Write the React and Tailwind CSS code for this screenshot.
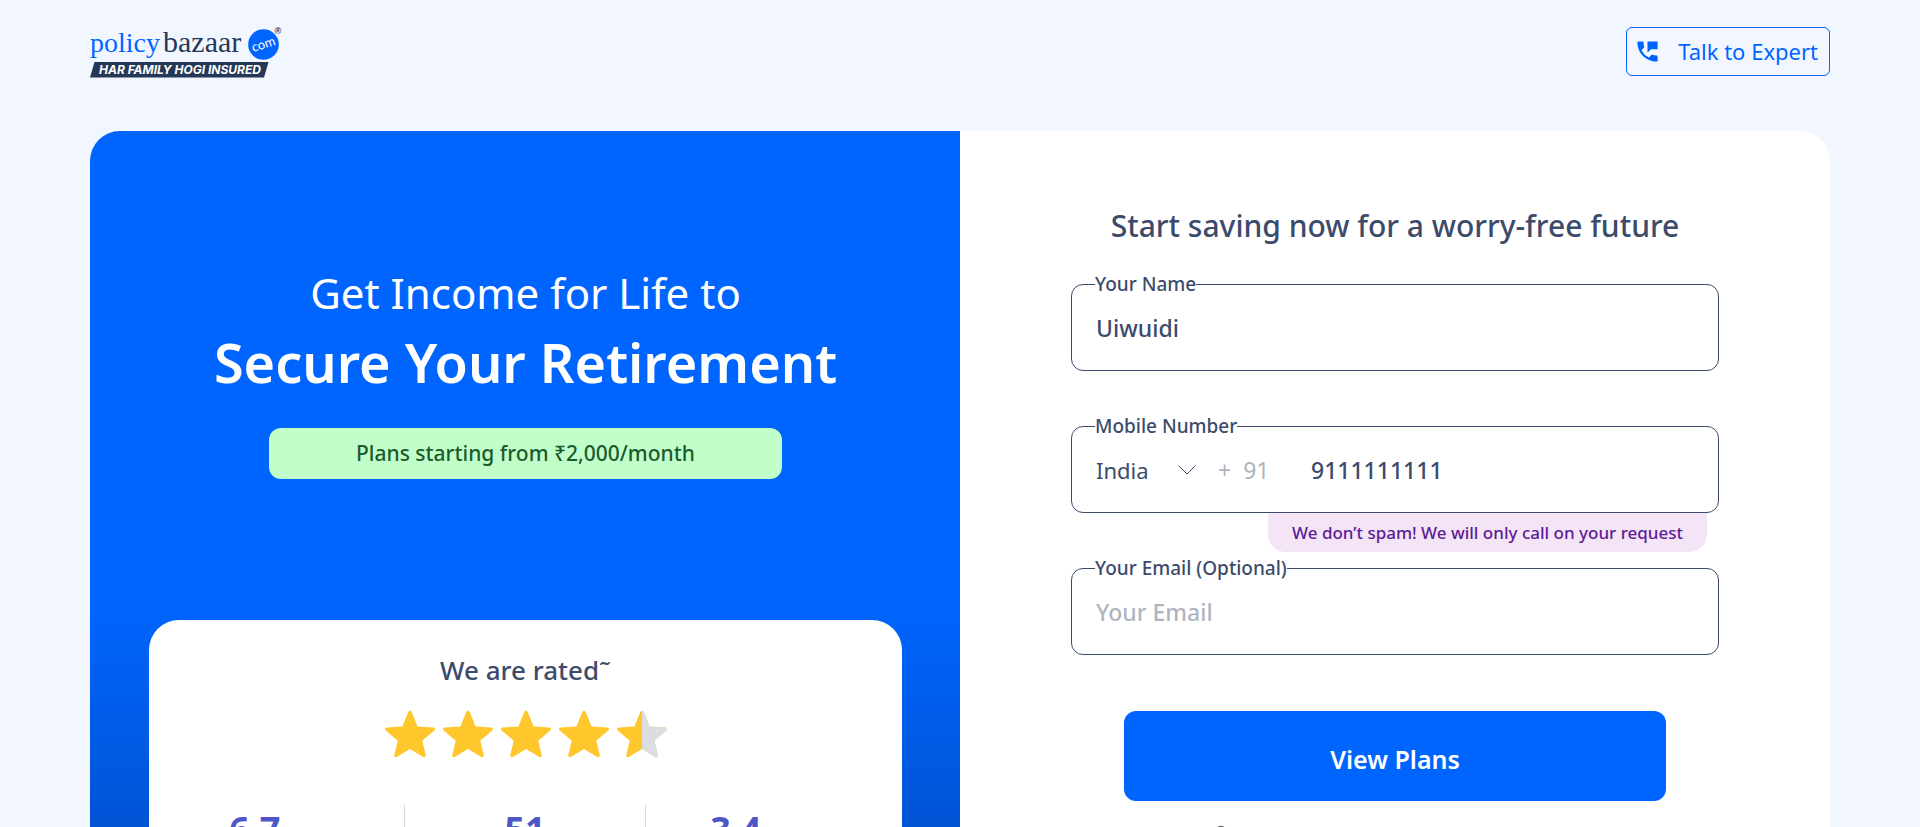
import React from "react";
import { MdPermPhoneMsg } from "react-icons/md";
import { Lock } from "lucide-react";

function Logo() {
  return (
    <svg viewBox="0 0 194 54" className="h-[54px] w-[194px] overflow-visible" role="img" aria-label="policybazaar.com">
      <text x="0" y="25" fontFamily="'Liberation Serif', serif" fontSize="28" fill="#0065ff">policy</text>
      <text x="73" y="25" fontFamily="'Liberation Serif', serif" fontSize="30" fill="#253858">bazaar</text>
      <circle cx="173.500" cy="17.500" r="15.300" fill="#0065ff" />
      <text x="173.500" y="21.500" textAnchor="middle" transform="rotate(-18 173.500 17.500)" fontFamily="Lato, sans-serif" fontSize="13" fill="#fff">com</text>
      <text x="184.500" y="7" fontFamily="'Liberation Sans', sans-serif" fontWeight="700" fontSize="9" fill="#253858">®</text>
      <path d="M4.500 35H178.500L174 50.500H0Z" fill="#253858" />
      <text x="9" y="47" fontFamily="Inter, sans-serif" fontWeight="700" fontStyle="italic" fontSize="12" fill="#fff">HAR FAMILY HOGI INSURED</text>
    </svg>
  );
}

const STAR =
  "M23.700 1.600Q25.500-1.200 27.300 1.600L33.200 16.300L49.500 17.400Q52.300 18.300 50 20.700L38 30.800L41.700 46Q41.500 48.400 39 47.500L25.500 39.300L12 47.500Q9.500 48.400 9.300 46L13 30.800L1 20.700Q-1.300 18.300 1.500 17.400L17.800 16.300Z";

function Star({ half }) {
  return (
    <svg viewBox="0 0 51 48" className="h-12 w-[50px]" aria-hidden="true">
      <path d={STAR} fill="#ffc72c" />
      {half && (
        <>
          <clipPath id="half"><rect x="25.500" y="0" width="26" height="48" /></clipPath>
          <path d={STAR} fill="#dcdde0" clipPath="url(#half)" />
        </>
      )}
    </svg>
  );
}

function Field({ id, label, children }) {
  return (
    <fieldset className="h-[100px] rounded-xl border border-[#3c4b6b] pl-[23px]">
      <legend className="text-[19px] leading-[26px]">
        <label htmlFor={id} className="block font-medium">{label}</label>
      </legend>
      <div className="flex h-[62px] items-center pl-px text-[23px]">{children}</div>
    </fieldset>
  );
}

const input = "h-9 min-w-0 flex-1 bg-transparent font-medium outline-none placeholder:text-[#b0b4c0]";

export default function App() {
  return (
    <div className="h-screen overflow-hidden bg-[#f2f6ff] px-[90px] font-['Noto_Sans',sans-serif] text-[#3c4b6b]">
      <header className="flex h-[131px] items-start justify-between pt-[27px]">
        <a href="#"><Logo /></a>
        <button className="flex h-[49px] items-center gap-[17px] rounded-md border border-[#0065ff] pr-[11px] pl-[7px] text-[22px] text-[#0065ff]">
          <MdPermPhoneMsg className="size-[27px]" />
          Talk to Expert
        </button>
      </header>

      <main className="grid grid-cols-2 overflow-hidden rounded-[30px] bg-white">
        <section className="flex flex-col items-center bg-linear-to-b from-[#0065ff] from-[466px] to-[#003c99] to-[1040px] pt-[131px] pr-[58px] pl-[59px] text-white">
          <h1 className="flex flex-col items-center whitespace-nowrap">
            <span className="text-[42px] leading-[61px]">Get Income for Life to</span>
            <strong className="text-[54px] leading-[78px] font-semibold">Secure Your Retirement</strong>
          </h1>
          <p className="mt-[27px] h-[51px] w-full max-w-[513px] rounded-xl bg-[#c1ffca] text-center text-[21px] leading-[51px] font-medium text-[#1c5b2c]">
            Plans starting from ₹2,000/month
          </p>
          <div className="mt-[141px] flex h-[420px] w-full flex-col items-center rounded-[30px] bg-white pt-[31px]">
            <h2 className="text-[26px] leading-[38px] font-medium text-[#3c4b6b]">We are rated<span>˜</span></h2>
            <div className="mt-[21px] flex gap-2" role="img" aria-label="Rated 4.5 out of 5">
              <Star /><Star /><Star /><Star /><Star half />
            </div>
            <ul className="mt-[47px] grid w-full grid-cols-3 divide-x divide-[#d8d9dd] px-4 text-center text-[36px] leading-[50px] font-bold text-[#4f56c7]">
              <li className="pr-[60px]">6.7</li><li>51</li><li className="pr-[60px]">3.4</li>
            </ul>
          </div>
        </section>

        <section className="px-[111px] pt-[72px]">
          <h2 className="text-center text-[30px] leading-[46px] font-medium whitespace-nowrap">
            Start saving now for a worry-free future
          </h2>
          <form onSubmit={(e) => e.preventDefault()}>
            <div className="mt-[22px] flex flex-col gap-[42px]">
              <Field id="name" label="Your Name">
                <input id="name" className={input} defaultValue="Uiwuidi" />
              </Field>
              <div className="relative">
                <Field id="mobile" label="Mobile Number">
                  <span className="relative flex items-center">
                    <select aria-label="Country" className="w-[102px] appearance-none bg-transparent text-[22px]" defaultValue="India">
                      <option>India</option>
                    </select>
                    <svg viewBox="0 0 18 10" className="pointer-events-none absolute right-[2px] h-[10px] w-[18px]" fill="none" stroke="#3c4b6b" aria-hidden="true">
                      <path d="M.5.500L9 9L17.500.500" />
                    </svg>
                  </span>
                  <span className="ml-5 flex w-[93px] gap-3 text-[#b0b4c0]"><span>+</span><span>91</span></span>
                  <input id="mobile" type="tel" className={input} defaultValue="9111111111" />
                </Field>
                <p className="absolute top-full right-3 rounded-b-[18px] bg-[#f3e4f6] px-6 text-[17px] leading-[39px] font-medium whitespace-nowrap text-[#5e1b96]">
                  We don’t spam! We will only call on your request
                </p>
              </div>
              <Field id="email" label="Your Email (Optional)">
                <input id="email" type="email" className={input} placeholder="Your Email" />
              </Field>
            </div>
            <div className="mt-[56px] px-[53px]">
              <button className="h-[90px] w-full rounded-xl bg-[#0065ff] pt-2 text-[25px] font-semibold text-white">View Plans</button>
              <Lock className="mt-6 ml-[89px] size-4 text-[#666]" aria-hidden="true" />
            </div>
          </form>
        </section>
      </main>
    </div>
  );
}
